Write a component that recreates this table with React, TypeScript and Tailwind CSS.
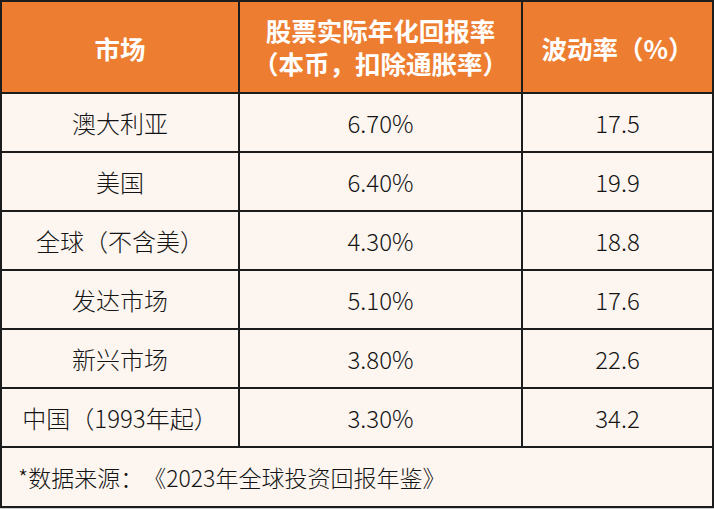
const rows = [
  ["澳大利亚", "6.70%", "17.5"],
  ["美国", "6.40%", "19.9"],
  ["全球（不含美）", "4.30%", "18.8"],
  ["发达市场", "5.10%", "17.6"],
  ["新兴市场", "3.80%", "22.6"],
  ["中国（1993年起）", "3.30%", "34.2"],
]

export default function App() {
  return (
    <div
      className="w-[714px] h-[509px] bg-[#cfcfcf] [text-spacing-trim:space-all]"
      style={{ fontFamily: '"Noto Sans CJK SC", "Noto Sans", sans-serif' }}
    >
      <table className="w-[712px] border-collapse table-fixed bg-[#fdf6f0] text-[#141414]">
        <colgroup>
          <col className="w-[238px]" />
          <col className="w-[283px]" />
          <col className="w-[191px]" />
        </colgroup>
        <thead>
          <tr className="h-[92px] bg-[#ed7d31] text-white font-bold text-[25.5px] leading-[33px]">
            <th className="border-2 border-[#1c1c1c]">市场</th>
            <th className="border-2 border-[#1c1c1c] pb-[2px]">
              股票实际年化回报率
              <br />
              （本币，扣除通胀率）
            </th>
            <th className="border-2 border-[#1c1c1c]">波动率（%）</th>
          </tr>
        </thead>
        <tbody className="text-[24px] font-light">
          {rows.map((r) => (
            <tr key={r[0]} className="h-[59px]">
              {r.map((c, i) => (
                <td key={i} className="border-2 border-[#1c1c1c] text-center">
                  {c}
                </td>
              ))}
            </tr>
          ))}
          <tr className="h-[60px]">
            <td colSpan={3} className="border-2 border-[#1c1c1c] pl-[16px] text-[23px]">
              *数据来源：《2023年全球投资回报年鉴》
            </td>
          </tr>
        </tbody>
      </table>
    </div>
  )
}
